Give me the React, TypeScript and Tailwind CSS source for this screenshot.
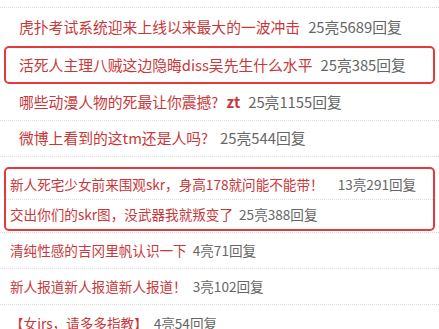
import React from "react";

type Row = { title: string; extra?: string; count: string; gap?: string };

const font = { fontFamily: '"Noto Sans CJK SC", "Noto Sans", sans-serif' };

const Line = ({ row, big, className = "" }: { row: Row; big?: boolean; className?: string }) => (
    <div className={`flex items-center whitespace-nowrap ${big ? "text-[14.8px]" : "text-[13.6px]"} ${className}`}>
        <span className="text-[#c8383a]">{row.title}</span>
        {row.extra && <span className="ml-[8px] text-[#c8383a] font-bold">{row.extra}</span>}
        <span className={`${row.gap ?? "ml-[8px]"} text-[#666666]`}>{row.count}</span>
    </div>
);

export default function App() {
    return (
        <div className="w-[439px] h-[329px] overflow-hidden bg-white" style={font}>
            <div className="h-[7px]" />
            <div className="border-t border-dotted border-[#dedede]" />

            {/* row 1 */}
            <Line
                row={{ title: "虎扑考试系统迎来上线以来最大的一波冲击", count: "25亮5689回复" }}
                big
                className="h-[38px] pl-[19px]"
            />

            {/* highlighted row */}
            <div className="mx-[4px] h-[38px] border-2 border-[#e5393a] rounded-[5px] flex items-center">
                <Line row={{ title: "活死人主理八贼这边隐晦diss吴先生什么水平", count: "25亮385回复" }} big className="pl-[13px]" />
            </div>

            <Line
                row={{ title: "哪些动漫人物的死最让你震撼?", extra: "zt", count: "25亮1155回复" }}
                big
                className="h-[37px] pl-[19px] border-b border-dotted border-[#dedede]"
            />
            <Line
                row={{ title: "微博上看到的这tm还是人吗?", count: "25亮544回复", gap: "ml-[12px]" }}
                big
                className="h-[36px] pl-[19px] border-b border-dotted border-[#dedede]"
            />

            <div className="h-[10px]" />

            {/* highlighted pair */}
            <div className="mx-[4px] border-2 border-[#e5393a] rounded-[5px]">
                <Line
                    row={{ title: "新人死宅少女前来围观skr，身高178就问能不能带！", count: "13亮291回复", gap: "ml-[14px]" }}
                    className="h-[31px] pl-[4px] border-b border-dotted border-[#dedede]"
                />
                <Line
                    row={{ title: "交出你们的skr图，没武器我就叛变了", count: "25亮388回复", gap: "ml-[6px]" }}
                    className="h-[29px] pl-[4px]"
                />
            </div>

            <div className="border-b border-dotted border-[#dedede] h-[2px]" />
            <Line
                row={{ title: "清纯性感的吉冈里帆认识一下", count: "4亮71回复", gap: "ml-[6px]" }}
                className="h-[36px] pl-[10px] border-b border-dotted border-[#dedede]"
            />
            <Line
                row={{ title: "新人报道新人报道新人报道！", count: "3亮102回复", gap: "ml-[6px]" }}
                className="h-[36px] pl-[10px] border-b border-dotted border-[#dedede]"
            />
            <Line
                row={{ title: "【女irs，请多多指教】", count: "4亮54回复", gap: "ml-[6px]" }}
                className="h-[36px] pl-[10px]"
            />
        </div>
    );
}
